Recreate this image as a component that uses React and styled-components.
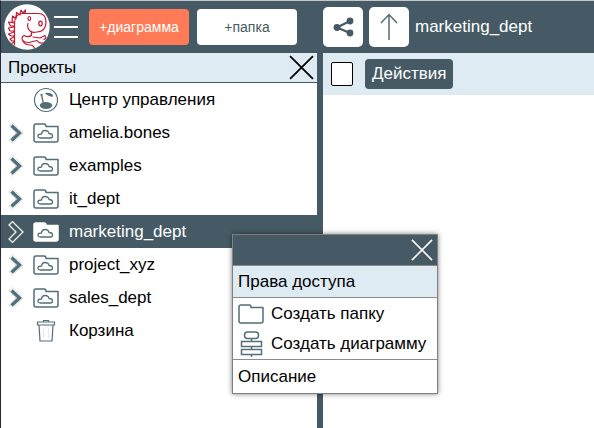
import React from "react";
import styled, { createGlobalStyle } from "styled-components";

const slate = "#455a64";
const iconTone = "#546e7a";
const pale = "#deebf3";
const orange = "#ff7b57";

const GlobalStyle = createGlobalStyle`
  *, *::before, *::after { box-sizing: border-box; }
  body {
    margin: 0;
    background: #fff;
    color: #000;
    font: 17px/20px "Liberation Sans", Arial, sans-serif;
  }
  button { font: inherit; color: inherit; border: 0; padding: 0; cursor: pointer; }
  svg { display: block; flex: none; }
`;

const Shell = styled.div`
  display: flex;
  position: relative;
  min-height: 100vh;
  border-top: 1px solid #c4c8ca;
  border-left: 1px solid #2c2838;
`;

const Sidebar = styled.aside`
  flex: 0 0 322px;
  border-right: 6px solid ${slate};
`;

const Main = styled.main`
  flex: 1;
  min-width: 0;
`;

const TopBar = styled.header`
  display: flex;
  align-items: center;
  height: 52px;
  background: ${slate};
  color: #fff;
`;

const SideTopBar = styled(TopBar)`
  padding-left: 3px;
`;

const LogoLink = styled.a`
  display: block;
`;

const IconButton = styled.button`
  display: flex;
  align-items: center;
  justify-content: center;
  background: transparent;
`;

const MenuButton = styled(IconButton)`
  width: 24px;
  height: 24px;
  margin: 0 11px 0 4px;
`;

const CreateButton = styled.button`
  width: 100px;
  height: 36px;
  margin-right: 8px;
  border-radius: 4px;
  font-size: 14px;
  background: ${(p) => (p.$primary ? orange : "#fff")};
  color: ${(p) => (p.$primary ? "#fff" : slate)};
`;

const SquareButton = styled(IconButton)`
  width: 40px;
  height: 40px;
  margin-right: 6px;
  border-radius: 5px;
  background: #fff;
`;

const PathTitle = styled.h1`
  margin: 0;
  font-size: 17px;
  font-weight: 400;
`;

const PanelHeading = styled.div`
  display: flex;
  align-items: center;
  justify-content: space-between;
  height: 30px;
  padding: 0 3px 0 7px;
  background: ${pale};
  border-bottom: 1px solid ${slate};
`;

const PanelTitle = styled.h2`
  margin: 0;
  font-size: 17px;
  font-weight: 400;
`;

const Tree = styled.ul`
  margin: 0;
  padding: 0;
  list-style: none;
`;

const TreeRow = styled.li`
  display: grid;
  grid-template-columns: 23px 27px 1fr;
  column-gap: 9px;
  align-items: center;
  height: 33px;
  background: ${(p) => (p.$selected ? slate : "transparent")};
  color: ${(p) => (p.$selected ? "#fff" : "#000")};
`;

const Toggle = styled(IconButton)`
  justify-content: flex-end;
`;

const TreeLink = styled.a`
  color: inherit;
  text-decoration: none;
`;

const ActionBar = styled.div`
  display: flex;
  align-items: center;
  gap: 12px;
  height: 42px;
  padding-left: 8px;
  background: ${pale};
`;

const SelectAll = styled.input`
  appearance: none;
  width: 22px;
  height: 24px;
  margin: 0;
  border: 1px solid #000;
  border-radius: 2px;
  background: #fff;
`;

const ActionsButton = styled.button`
  height: 30px;
  padding: 0 7px;
  border-radius: 4px;
  background: ${slate};
  color: #fff;
`;

const ContextMenu = styled.div`
  position: absolute;
  left: 231px;
  top: 233px;
  border: 1px solid #808080;
  background: #fff;
  box-shadow: 0 0 5px rgba(0, 0, 0, 0.5);
`;

const MenuHead = styled.div`
  display: flex;
  align-items: center;
  justify-content: flex-end;
  height: 30px;
  padding-right: 4px;
  background: ${slate};
`;

const MenuGroup = styled.div`
  border-top: 1px solid #8c8c8c;
`;

const MenuItem = styled.button`
  display: flex;
  align-items: center;
  gap: 7px;
  width: 100%;
  height: ${(p) => p.$height || 31}px;
  padding: 0 11px 0 5px;
  text-align: left;
  white-space: nowrap;
  background: ${(p) => (p.$active ? pale : "#fff")};
`;

function Dino() {
  return (
    <svg width="46" height="46" viewBox="0 0 46 46">
      <defs>
        <clipPath id="disc"><circle cx="23" cy="23" r="22.7" /></clipPath>
      </defs>
      <circle cx="23" cy="23" r="22.7" fill="#fff" />
      <g clipPath="url(#disc)" fill="none" stroke="#c51632" strokeWidth="1.2" strokeLinejoin="round" strokeLinecap="round">
        <path d="M10.500 41V20Q10.500 9.500 19 9.500H34Q42 9.500 42 18Q42 27.500 33 28Q26 29.500 24 24Q23 21 24 19.500" />
        <path d="M27.500 28V31" />
        <path d="M10 18L8 18L8.500 12L12 14.500L12.500 8.500L16 11L17 6L19 9L21.500 6L21 9.500" />
        <path d="M10.500 19L4.500 18L6.500 22L10 22M10 23L4.500 24L6 27L10 27M10 28L4.500 30L7 32L10 32M10 33L6 35L8 37L10 37M10 38L7 40" />
        <path d="M27.500 31Q25 34 20 31.500Q17 33 18.500 36Q20 38.500 25 38.500L33 36.500Q36 41 41 38L44 38" />
        <path d="M29 33L36 34L41 31.500Q43 34 40 35.500" />
        <path d="M19 37Q21 41 26 41Q30 41 31 46" />
        <ellipse cx="25.300" cy="14.500" rx="1.300" ry="2" />
        <ellipse cx="36.500" cy="19.500" rx="1.700" ry="2.300" />
      </g>
    </svg>
  );
}

function Bars() {
  return (
    <svg width="24" height="24" viewBox="0 0 24 24" stroke="#fff" strokeWidth="2">
      <path d="M0 2H24M0 12H24M0 22H24" />
    </svg>
  );
}

function Cross({ size, color }) {
  return (
    <svg width={size} height={size} viewBox="0 0 24 24" stroke={color} strokeWidth="1.7">
      <path d="M1 1L23 23M23 1L1 23" />
    </svg>
  );
}

function Share() {
  return (
    <svg width="22" height="22" viewBox="0 0 22 22" fill={slate} stroke={slate} strokeWidth="2">
      <path d="M5 11.500L18 5M5 11.500L18 17" />
      <circle cx="5" cy="11.500" r="3.400" stroke="none" />
      <circle cx="18" cy="5" r="3.400" stroke="none" />
      <circle cx="18" cy="17" r="3.400" stroke="none" />
    </svg>
  );
}

function ArrowUp() {
  return (
    <svg width="18" height="28" viewBox="0 0 18 28" fill="none" stroke={iconTone} strokeWidth="1.5">
      <path d="M9 27V2M1 10L9 1.5L17 10" />
    </svg>
  );
}

function Chevron({ selected }) {
  const shape = "M1 5L4.500 1.500L15 12L4.500 22.500L1 19L8 12Z";
  return selected ? (
    <svg width="16" height="24" viewBox="0 0 16 24" fill={slate} stroke="#fff" strokeWidth="1.2">
      <path d={shape} />
    </svg>
  ) : (
    <svg width="16" height="24" viewBox="0 0 16 24">
      <path d={shape} fill="#fff" stroke="#c4cacd" strokeWidth="1" strokeDasharray="1 1" />
      <path d="M3.500 4.500L11.500 12L3.500 19.500" fill="none" stroke={iconTone} strokeWidth="3.400" />
    </svg>
  );
}

function CloudFolder({ selected }) {
  return (
    <svg width="26" height="22" viewBox="0 0 26 22" fill={selected ? "#fff" : "none"} stroke={selected ? "#fff" : iconTone} strokeWidth="1.5" strokeLinejoin="round">
      <path d="M3 2H11Q13 2 13 4.500H25V18Q25 20 23 20H3Q1 20 1 18V4Q1 2 3 2Z" />
      <path stroke={iconTone} strokeWidth="1.300" d="M7.500 16Q4.500 16 5 13.500Q5.500 12 8.500 12Q9 8.500 12 8.500Q15.500 8.500 16 11.500Q19.500 11.500 19.500 14Q19.500 16 17.500 16Z" />
    </svg>
  );
}

function ControlCenter() {
  return (
    <svg width="26" height="26" viewBox="0 0 26 26" fill="none" stroke={iconTone}>
      <circle cx="13" cy="13" r="11.500" strokeWidth="1.200" />
      <ellipse cx="13" cy="18.500" rx="6.200" ry="3.400" fill={iconTone} stroke="none" />
      <path d="M8.500 7.500L10.500 17" strokeWidth="1.300" />
      <path d="M7.500 8L9.500 7.500" strokeWidth="1.500" />
      <path d="M12 6Q17 5 20 8L19.500 10Q16 9.500 12.500 7Z" fill={iconTone} stroke="none" />
    </svg>
  );
}

function Trash() {
  return (
    <svg width="26" height="24" viewBox="0 0 26 24" fill="none" stroke={iconTone} strokeWidth="1.2">
      <path d="M4.500 3H21.500V6H4.500ZM10.500 3V1.500H15.500V3M6 6L7 22H19L20 6" />
      <path d="M10.500 9V19M15.500 9V19" stroke="#e4e9eb" strokeWidth="1" />
    </svg>
  );
}

function Folder() {
  return (
    <svg width="26" height="20" viewBox="0 0 26 20" fill="none" stroke={iconTone} strokeWidth="1.5" strokeLinejoin="round">
      <path d="M3 1H11.500Q13 1 13 3.500H25V17Q25 19 23 19H3Q1 19 1 17V3Q1 1 3 1Z" />
    </svg>
  );
}

function Diagram() {
  return (
    <svg width="26" height="26" viewBox="0 0 26 26" fill="none" stroke={iconTone} strokeWidth="1.5">
      <rect x="6.500" y="1" width="14" height="6.500" rx="3" />
      <rect x="3.500" y="10.500" width="20" height="5" />
      <rect x="3.500" y="18.500" width="20" height="5" />
      <path d="M13.500 7.500V10.500M13.500 15.500V18.500M13.500 23.500V26" />
    </svg>
  );
}

const projects = [
  { name: "Центр управления", kind: "center" },
  { name: "amelia.bones" },
  { name: "examples" },
  { name: "it_dept" },
  { name: "marketing_dept", selected: true },
  { name: "project_xyz" },
  { name: "sales_dept" },
  { name: "Корзина", kind: "trash" },
];

function ProjectRow({ name, kind, selected }) {
  return (
    <TreeRow $selected={selected}>
      {kind ? (
        <span />
      ) : (
        <Toggle aria-label={`Развернуть ${name}`}>
          <Chevron selected={selected} />
        </Toggle>
      )}
      {kind === "center" ? <ControlCenter /> : kind === "trash" ? <Trash /> : <CloudFolder selected={selected} />}
      <TreeLink href="#">{name}</TreeLink>
    </TreeRow>
  );
}

export default function App() {
  return (
    <>
      <GlobalStyle />
      <Shell>
        <Sidebar>
          <SideTopBar>
            <LogoLink href="#" aria-label="Главная"><Dino /></LogoLink>
            <MenuButton aria-label="Меню"><Bars /></MenuButton>
            <CreateButton $primary>+диаграмма</CreateButton>
            <CreateButton>+папка</CreateButton>
          </SideTopBar>
          <PanelHeading>
            <PanelTitle>Проекты</PanelTitle>
            <IconButton aria-label="Закрыть панель"><Cross size={25} color="#000" /></IconButton>
          </PanelHeading>
          <Tree>
            {projects.map((p) => <ProjectRow key={p.name} {...p} />)}
          </Tree>
        </Sidebar>
        <Main>
          <TopBar>
            <SquareButton aria-label="Поделиться"><Share /></SquareButton>
            <SquareButton aria-label="Наверх"><ArrowUp /></SquareButton>
            <PathTitle>marketing_dept</PathTitle>
          </TopBar>
          <ActionBar>
            <SelectAll type="checkbox" aria-label="Выбрать все" />
            <ActionsButton>Действия</ActionsButton>
          </ActionBar>
        </Main>
        <ContextMenu>
          <MenuHead>
            <IconButton aria-label="Закрыть меню"><Cross size={22} color="#fff" /></IconButton>
          </MenuHead>
          <MenuGroup><MenuItem $active>Права доступа</MenuItem></MenuGroup>
          <MenuGroup>
            <MenuItem><Folder />Создать папку</MenuItem>
            <MenuItem $height={30}><Diagram />Создать диаграмму</MenuItem>
          </MenuGroup>
          <MenuGroup><MenuItem $height={33}>Описание</MenuItem></MenuGroup>
        </ContextMenu>
      </Shell>
    </>
  );
}
